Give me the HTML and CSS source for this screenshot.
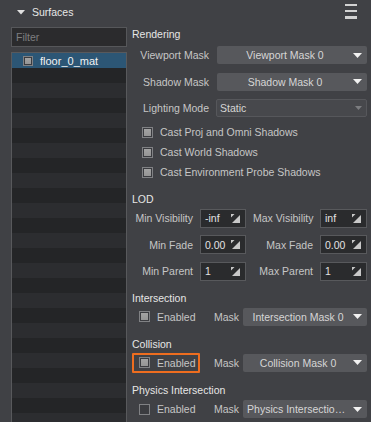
FILE: index.html
```html
<!DOCTYPE html>
<html lang="en">

<head>
    <meta charset="UTF-8">
    <meta name="viewport" content="width=device-width, initial-scale=1.0">
    <title>Surfaces</title>

    <link rel="stylesheet" href="styles.css">
</head>

<body>
    <header class="panel-head">
        <svg class="caret" width="8" height="5" viewBox="0 0 8 5"><path d="M0 0H8L4 4.5Z" fill="#e0e0e0"/></svg>
        <span class="title">Surfaces</span>
        <span class="menu"><i></i><i></i><i></i></span>
    </header>

    <main class="panel-body">
        <aside class="surfaces">
            <input class="filter" type="text" placeholder="Filter">
            <div class="list">
                <div class="list-item selected"><span class="check on"></span>floor_0_mat</div>
                <div class="list-rest"></div>
            </div>
        </aside>

        <section class="props">
            <h2 class="group">Rendering</h2>
            <div class="fields">
                <label>Viewport Mask</label>
                <div class="combo"><span>Viewport Mask 0</span><svg width="9" height="5" viewBox="0 0 9 5"><path d="M0 0H9L4.5 5Z" fill="#f2f2f2"/></svg></div>
                <label>Shadow Mask</label>
                <div class="combo"><span>Shadow Mask 0</span><svg width="9" height="5" viewBox="0 0 9 5"><path d="M0 0H9L4.5 5Z" fill="#f2f2f2"/></svg></div>
                <label>Lighting Mode</label>
                <div class="combo flat"><span>Static</span><svg width="7" height="4" viewBox="0 0 7 4"><path d="M0 0H7L3.5 4Z" fill="#7c7d80"/></svg></div>
            </div>
            <div class="checks">
                <div class="check-row"><span class="check on"></span>Cast Proj and Omni Shadows</div>
                <div class="check-row"><span class="check on"></span>Cast World Shadows</div>
                <div class="check-row"><span class="check on"></span>Cast Environment Probe Shadows</div>
            </div>

            <h2 class="group lod-head">LOD</h2>
            <div class="lod">
                <label>Min Visibility</label>
                <div class="spin"><span>-inf</span><svg width="9" height="9" viewBox="0 0 9 9"><path d="M9 1V9H1Z M0 0H3.5L0 3.5Z" fill="#c8c8c8"/></svg></div>
                <label>Max Visibility</label>
                <div class="spin"><span>inf</span><svg width="9" height="9" viewBox="0 0 9 9"><path d="M9 1V9H1Z M0 0H3.5L0 3.5Z" fill="#c8c8c8"/></svg></div>
                <label>Min Fade</label>
                <div class="spin"><span>0.00</span><svg width="9" height="9" viewBox="0 0 9 9"><path d="M9 1V9H1Z M0 0H3.5L0 3.5Z" fill="#c8c8c8"/></svg></div>
                <label>Max Fade</label>
                <div class="spin"><span>0.00</span><svg width="9" height="9" viewBox="0 0 9 9"><path d="M9 1V9H1Z M0 0H3.5L0 3.5Z" fill="#c8c8c8"/></svg></div>
                <label>Min Parent</label>
                <div class="spin"><span>1</span><svg width="9" height="9" viewBox="0 0 9 9"><path d="M9 1V9H1Z M0 0H3.5L0 3.5Z" fill="#c8c8c8"/></svg></div>
                <label>Max Parent</label>
                <div class="spin"><span>1</span><svg width="9" height="9" viewBox="0 0 9 9"><path d="M9 1V9H1Z M0 0H3.5L0 3.5Z" fill="#c8c8c8"/></svg></div>
            </div>

            <h2 class="group sub-head">Intersection</h2>
            <div class="mask-row">
                <div class="toggle"><span class="check on"></span>Enabled</div>
                <span class="mask-label">Mask</span>
                <div class="combo"><span>Intersection Mask 0</span><svg width="9" height="5" viewBox="0 0 9 5"><path d="M0 0H9L4.5 5Z" fill="#f2f2f2"/></svg></div>
            </div>

            <h2 class="group sub-head">Collision</h2>
            <div class="mask-row">
                <div class="toggle marked"><span class="check on"></span>Enabled</div>
                <span class="mask-label">Mask</span>
                <div class="combo"><span>Collision Mask 0</span><svg width="9" height="5" viewBox="0 0 9 5"><path d="M0 0H9L4.5 5Z" fill="#f2f2f2"/></svg></div>
            </div>

            <h2 class="group sub-head">Physics Intersection</h2>
            <div class="mask-row">
                <div class="toggle"><span class="check"></span>Enabled</div>
                <span class="mask-label">Mask</span>
                <div class="combo"><span>Physics Intersection Mask 0</span><svg width="9" height="5" viewBox="0 0 9 5"><path d="M0 0H9L4.5 5Z" fill="#f2f2f2"/></svg></div>
            </div>
        </section>
    </main>
</body>

</html>
```

FILE: styles.css
```css
* {
    box-sizing: border-box;
}

html,
body {
    height: 100%;
}

body {
    margin: 0;
    display: flex;
    flex-direction: column;
    overflow: hidden;
    font-family: "Liberation Sans", Arial, sans-serif;
    font-size: 10.5px;
    color: #c6c6c6;
    background: #404145;
}

.panel-head {
    display: flex;
    align-items: center;
    height: 24px;
    padding: 0 14px 0 17px;
    color: #e8e8e8;
    line-height: 24px;
}

.caret {
    margin-right: 7px;
    margin-top: 1px;
}

.menu {
    display: flex;
    flex-direction: column;
    gap: 3.8px;
    align-self: flex-start;
    margin: 3.5px 0 0 auto;
}

.menu i {
    display: block;
    width: 12px;
    height: 2.5px;
    background: #d2d2d2;
}

.panel-body {
    flex: 1;
    display: flex;
    gap: 5px;
    min-height: 0;
    padding: 3px 4px 0 11px;
}

/* surface list */

.surfaces {
    display: flex;
    flex-direction: column;
    width: 116px;
}

.filter {
    height: 20px;
    padding: 0 4px;
    border: 1px solid #56575a;
    background: #2b2b2d;
    color: #ddd;
    font: inherit;
    outline: none;
}

.filter::placeholder {
    color: #7e7e80;
}

.list {
    flex: 1;
    display: flex;
    flex-direction: column;
    margin-top: 5px;
    border: 1px solid #58595c;
    border-bottom: 0;
}

.list-item {
    display: flex;
    align-items: center;
    gap: 7px;
    height: 15px;
    padding-left: 11px;
    color: #f2f2f2;
    font-size: 11px;
}

.list-item.selected {
    background: #2c5675;
}

.list-item .check {
    width: 10px;
    height: 10px;
}

.list-rest {
    flex: 1;
    background: repeating-linear-gradient(#242527 0 15px, #2c2d30 15px 30px);
}

/* properties */

.props {
    flex: 1;
    min-width: 0;
}

.group {
    margin: 0;
    font-size: inherit;
    font-weight: normal;
    line-height: 14px;
    color: #e6e6e6;
}

.fields {
    display: grid;
    grid-template-columns: 77px 1fr;
    column-gap: 8px;
    row-gap: 8.5px;
    align-items: center;
    margin-top: 5px;
}

.fields label,
.lod label {
    text-align: right;
    white-space: nowrap;
}

.combo {
    display: flex;
    align-items: center;
    height: 18px;
    padding-right: 5px;
    border-radius: 2px;
    background: #57585c;
    color: #d6d6d6;
}

.combo span {
    flex: 1;
    min-width: 0;
    overflow: hidden;
    white-space: nowrap;
    text-overflow: ellipsis;
    text-align: center;
    padding-left: 4px;
}

.combo svg {
    flex: none;
    margin-left: 4px;
}

.combo.flat {
    margin-left: -1px;
    border: 1px solid #56575b;
    background: #47484c;
    padding-right: 4px;
}

.combo.flat span {
    text-align: left;
    padding-left: 3px;
}

.checks {
    margin-top: 5px;
}

.check-row {
    display: flex;
    align-items: center;
    gap: 7px;
    height: 20px;
    padding-left: 10px;
}

.check {
    position: relative;
    flex: none;
    width: 11px;
    height: 11px;
    border: 1px solid #808184;
    background: #3b3c40;
}

.check.on::after {
    content: "";
    position: absolute;
    inset: 1px;
    background: linear-gradient(#a3a3a3, #959595);
}

.lod-head {
    margin-top: 10.3px;
}

.lod {
    display: grid;
    grid-template-columns: 61px 46px 60px 47px;
    column-gap: 7px;
    row-gap: 7.3px;
    align-items: center;
    margin-top: 2.7px;
}

.spin {
    display: flex;
    align-items: center;
    height: 19px;
    padding: 0 5px 0 4px;
    border: 1px solid #58595c;
    background: #2a2b2d;
    color: #e2e2e2;
}

.spin svg {
    margin-left: auto;
}

.sub-head {
    margin-top: 10.2px;
}

.mask-row {
    display: flex;
    align-items: center;
    height: 20px;
    margin-top: 2px;
}

.toggle {
    display: flex;
    align-items: center;
    gap: 7px;
    width: 68px;
    height: 20px;
    padding-left: 5px;
    border: 2px solid transparent;
    border-radius: 1px;
}

.toggle.marked {
    border-color: #ee6d1f;
}

.mask-label {
    margin: 0 4px 0 14px;
}

.mask-row .combo {
    flex: 1;
    min-width: 0;
}
```
